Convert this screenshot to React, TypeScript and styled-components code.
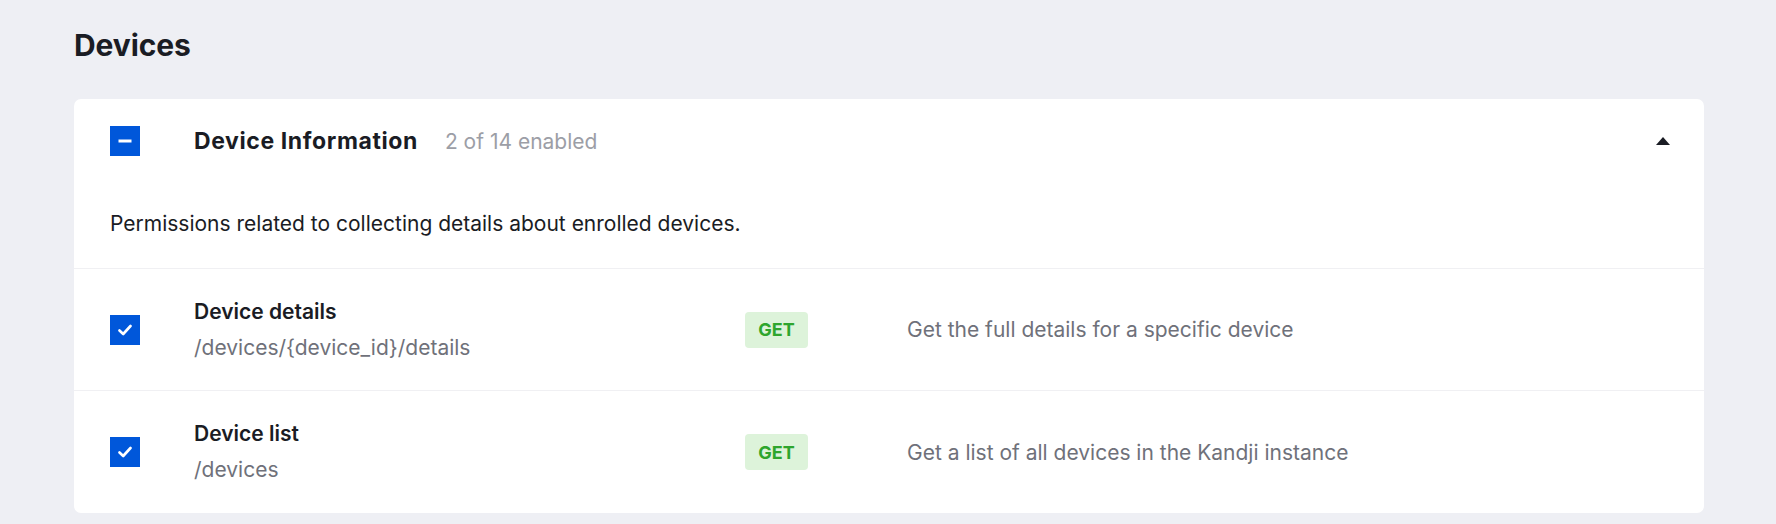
import React from "react";
import styled, { createGlobalStyle } from "styled-components";

const GlobalStyle = createGlobalStyle`
  body {
    margin: 0;
    background: #eeeff4;
    font-family: Inter, "Noto Sans", sans-serif;
    color: #1a1c24;
  }
`;

const Page = styled.div`
  padding: 25px 72px 11px 74px;
`;

const Title = styled.h2`
  margin: 0 0 34px 0;
  font-size: 30px;
  line-height: 40px;
  font-weight: 700;
  letter-spacing: -0.1px;
  color: #1a1c24;
`;

const Card = styled.div`
  background: #ffffff;
  border-radius: 7px;
  overflow: hidden;
`;

const Header = styled.div`
  display: flex;
  align-items: center;
  height: 84px;
  padding: 0 34px 0 36px;
`;

const Checkbox = styled.span`
  width: 30px;
  height: 30px;
  flex: none;
  background: #0057da;
  display: flex;
  align-items: center;
  justify-content: center;
`;

const Group = styled.div`
  flex: 1;
  display: flex;
  align-items: baseline;
  gap: 27px;
  margin-left: 54px;
`;

const GroupName = styled.span`
  font-size: 23px;
  font-weight: 700;
  letter-spacing: 0.6px;
  color: #1a1c24;
`;

const Count = styled.span`
  font-size: 21px;
  color: #9c9ea6;
`;

const Caret = styled.span`
  width: 0;
  height: 0;
  border-left: 7px solid transparent;
  border-right: 7px solid transparent;
  border-bottom: 8px solid #1a1c24;
`;

const Intro = styled.p`
  margin: 0;
  padding: 27px 36px 30px;
  font-size: 21px;
  line-height: 28px;
  color: #1a1c24;
  border-bottom: 1.5px solid #f0f0f3;
`;

const Row = styled.div<{ $last?: boolean }>`
  display: grid;
  grid-template-columns: 30px 605px 162px 1fr;
  align-items: center;
  height: 122px;
  padding: 0 36px;
  box-sizing: border-box;
  border-bottom: ${(p) => (p.$last ? "none" : "1.5px solid #f0f0f3")};
`;

const Endpoint = styled.div`
  margin-left: 54px;
  display: flex;
  flex-direction: column;
  gap: 8px;
`;

const EndpointName = styled.span`
  font-size: 21px;
  line-height: 28px;
  font-weight: 600;
  color: #1a1c24;
`;

const EndpointPath = styled.span`
  font-size: 21px;
  line-height: 28px;
  color: #6f717a;
`;

const Method = styled.span`
  justify-self: start;
  width: 63px;
  height: 36px;
  border-radius: 4px;
  background: #ddf3da;
  color: #2ea52d;
  font-size: 18px;
  font-weight: 700;
  display: flex;
  align-items: center;
  justify-content: center;
`;

const Desc = styled.span`
  font-size: 21px;
  color: #6f717a;
`;

const Minus = () => (
  <svg width="14" height="4" viewBox="0 0 14 4">
    <rect x="0.5" y="0.5" width="13" height="3" fill="#fff" />
  </svg>
);

const Check = () => (
  <svg width="14" height="12" viewBox="0 0 14 12">
    <path
      d="M1.5 6.5 L5.2 10 L12.5 2"
      fill="none"
      stroke="#fff"
      strokeWidth="2.6"
      strokeLinecap="round"
      strokeLinejoin="round"
    />
  </svg>
);

const endpoints = [
  {
    name: "Device details",
    path: "/devices/{device_id}/details",
    method: "GET",
    desc: "Get the full details for a specific device",
  },
  {
    name: "Device list",
    path: "/devices",
    method: "GET",
    desc: "Get a list of all devices in the Kandji instance",
  },
];

const App: React.FC = () => {
  return (
    <Page>
      <GlobalStyle />
      <Title>Devices</Title>
      <Card>
        <Header>
          <Checkbox>
            <Minus />
          </Checkbox>
          <Group>
            <GroupName>Device Information</GroupName>
            <Count>2 of 14 enabled</Count>
          </Group>
          <Caret />
        </Header>
        <Intro>
          Permissions related to collecting details about enrolled devices.
        </Intro>
        {endpoints.map((e, i) => (
          <Row key={e.path} $last={i === endpoints.length - 1}>
            <Checkbox>
              <Check />
            </Checkbox>
            <Endpoint>
              <EndpointName>{e.name}</EndpointName>
              <EndpointPath>{e.path}</EndpointPath>
            </Endpoint>
            <Method>{e.method}</Method>
            <Desc>{e.desc}</Desc>
          </Row>
        ))}
      </Card>
    </Page>
  );
};

export default App;
